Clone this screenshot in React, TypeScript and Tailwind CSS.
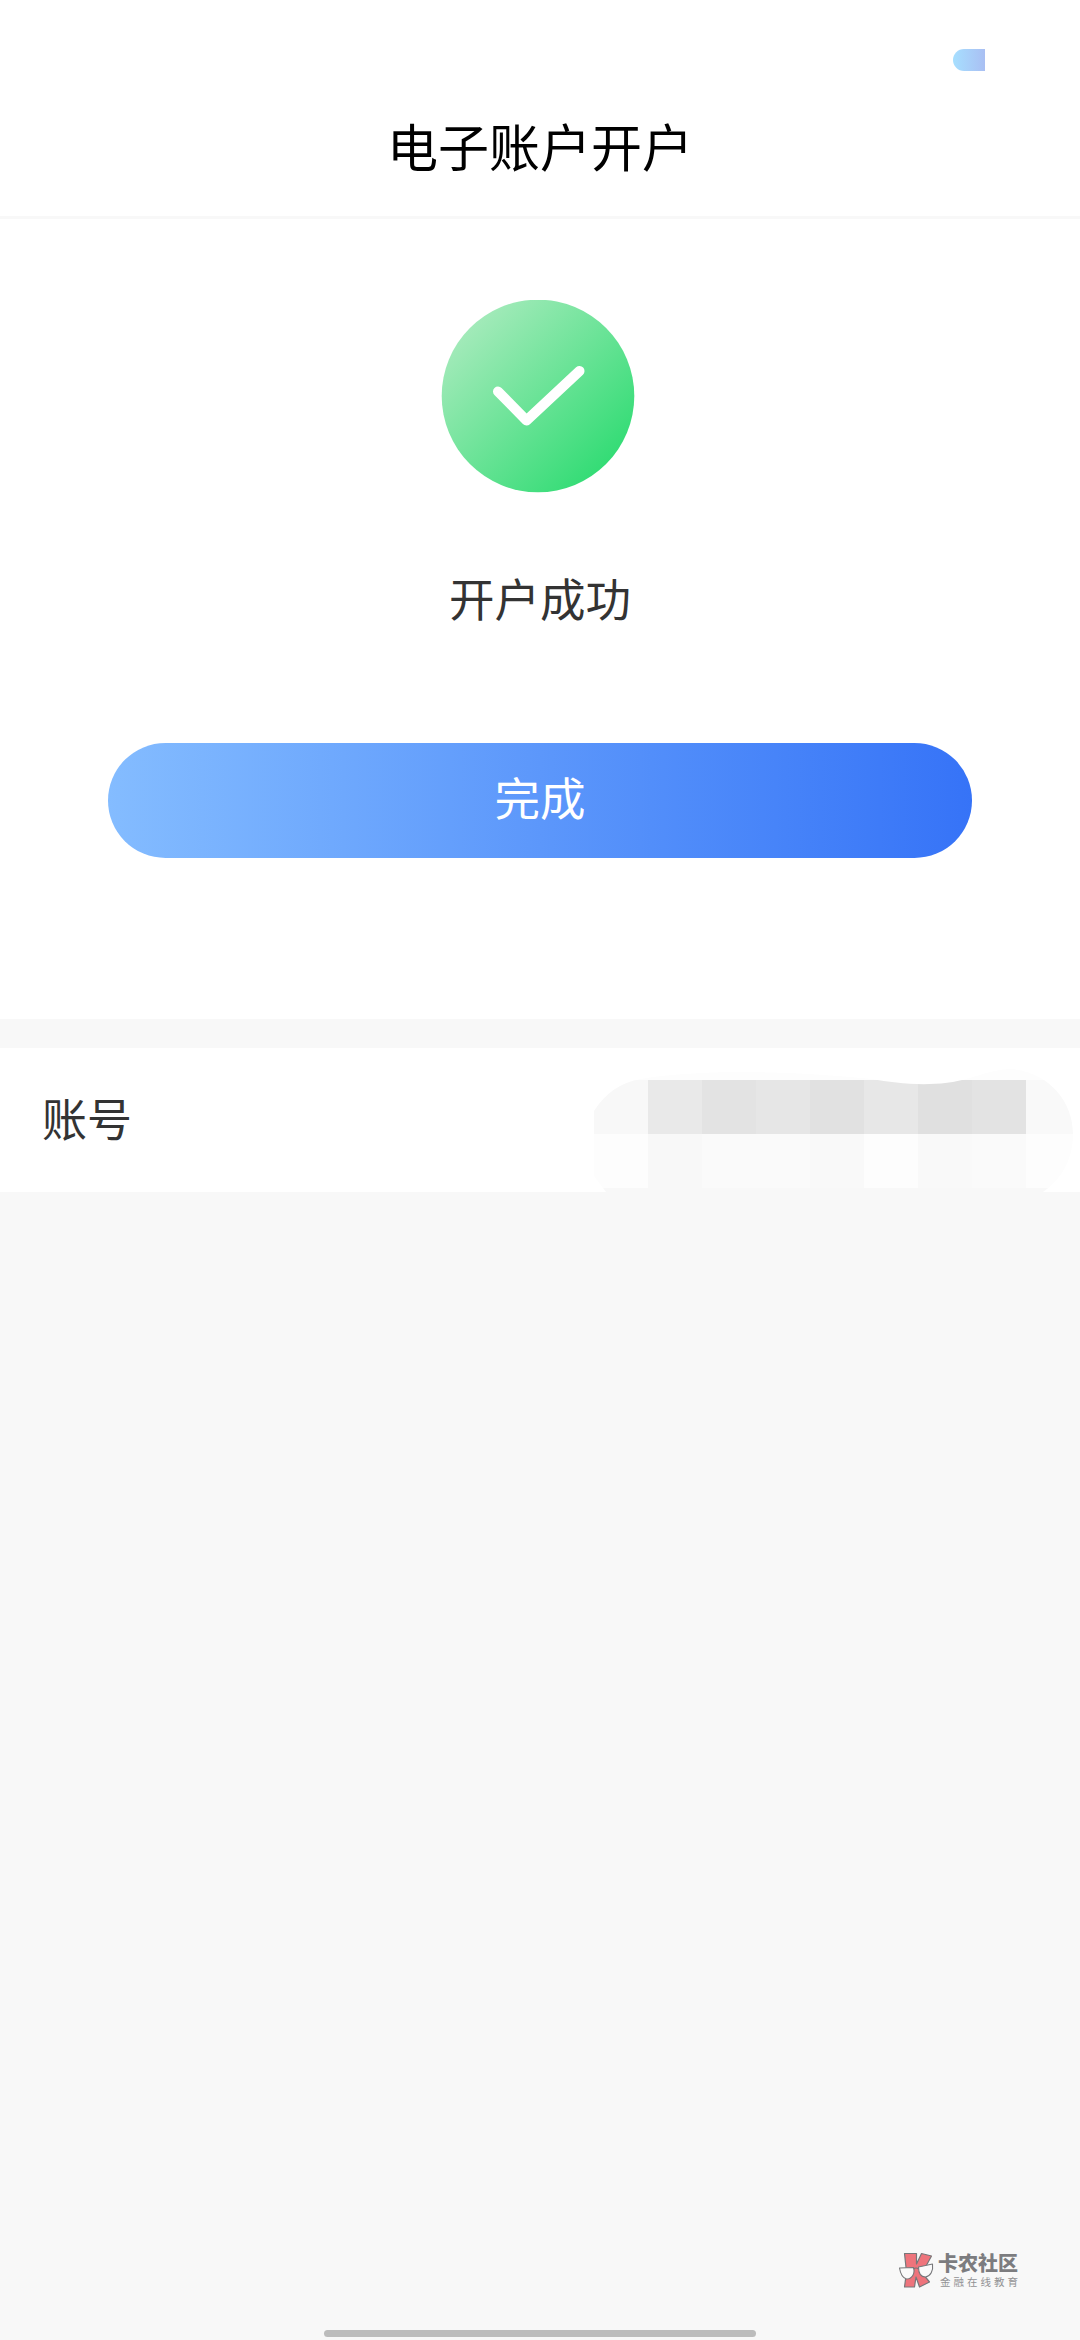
import React from "react";

const CELL = 54;

// Two rows of blocks that hide the account number
const mosaicRows: string[][] = [
  ["#f8f8f8", "#e9e9e9", "#e3e3e3", "#e6e6e6", "#e1e1e1", "#e7e7e7", "#e0e0e0", "#e3e3e3", "#f9f9f9"],
  ["#fdfdfd", "#f8f8f8", "#fafafa", "#fafafa", "#f9f9f9", "#fdfdfd", "#f9f9f9", "#fafafa", "#fdfdfd"],
];

const SuccessIcon: React.FC = () => (
  <svg width="194" height="194" viewBox="0 0 194 194" fill="none">
    <defs>
      <linearGradient id="success" x1="28" y1="28" x2="166" y2="166" gradientUnits="userSpaceOnUse">
        <stop stopColor="#a2eab9" />
        <stop offset="1" stopColor="#33dc75" />
      </linearGradient>
    </defs>
    <circle cx="97" cy="96" r="96.3" fill="url(#success)" />
    <path
      d="M57 91.500L85.500 120.500L138.500 71"
      stroke="white"
      strokeWidth="10"
      strokeLinecap="round"
      strokeLinejoin="round"
    />
  </svg>
);

const MaskedNumber: React.FC = () => (
  <svg width="486" height="144" viewBox="0 0 486 144">
    <defs>
      <clipPath id="mask">
        <path d="M0 63Q17 36 47 31Q80 25 142 24Q210 24 278 31C305 36 343 40 376 30Q403 21 417 21C454 24 479 53 479 86C479 111 468 131 449 144H12L0 128Z" />
      </clipPath>
    </defs>
    <g clipPath="url(#mask)" shapeRendering="crispEdges">
      <rect width="486" height="32" fill="#fdfdfd" />
      {mosaicRows.map((row, y) =>
        row.map((fill, x) => (
          <rect key={`${x}-${y}`} x={x * CELL} y={32 + y * CELL} width={CELL} height={CELL} fill={fill} />
        ))
      )}
      <rect y="140" width="486" height="4" fill="#f8f8f8" />
    </g>
  </svg>
);

const CommunityLogo: React.FC = () => (
  <svg
    className="overflow-visible"
    width="36"
    height="38"
    viewBox="1.5 1 36 38"
    stroke="#77777a"
    strokeLinejoin="round"
  >
    <path
      d="M6 2.500H18V13L23 2.500L33 5L27 16L22 20L31 31L21 36L17.500 26L16 36H6L8 21Z"
      fill="#ee747c"
      strokeWidth="1.200"
    />
    <path d="M1 17L15 16.500C17 23 13 28 8 28C4 27 2 23 1 17Z" fill="#fafafa" strokeWidth="1.100" />
    <path d="M20 16L34 13C35 20 32 25 27 26C22 26 20 22 20 16Z" fill="#fafafa" strokeWidth="1.100" />
    <path d="M15 18Q17.500 16 20 18" fill="none" strokeWidth="1.200" />
  </svg>
);

const App: React.FC = () => {
  return (
    <div className="flex h-[2340px] w-[1080px] flex-col overflow-hidden bg-[#f8f8f8] font-['Noto_Sans_CJK_SC',sans-serif] text-[#333333]">
      <header className="flex h-[219px] shrink-0 flex-col border-b-3 border-[#f8f8f8] bg-white">
        <div className="flex h-[82px] items-end justify-end pr-[95px] pb-[11px]">
          <div className="h-[22px] w-8 rounded-l-full bg-linear-to-r from-[#a6dfff] to-[#a9bff3]" />
        </div>
        <h1 className="text-center text-[51px] leading-[127px] text-black">电子账户开户</h1>
      </header>

      <main className="flex h-[800px] shrink-0 flex-col items-center bg-white pt-[81px]">
        <div className="mr-[4px]">
          <SuccessIcon />
        </div>
        <p className="mt-[68px] text-[45.500px] leading-[70px]">开户成功</p>
        <button className="mt-[111px] h-[115px] w-[864px] rounded-full bg-linear-to-r from-[#84bcff] via-[#5c97fb] to-[#3673f7] pb-[9px] text-[45.500px] leading-[106px] text-white">
          完成
        </button>
      </main>

      <section className="mt-[29px] flex h-36 shrink-0 justify-between bg-white pl-[42px]">
        <span className="text-[45px] leading-[140px]">账号</span>
        <MaskedNumber />
      </section>

      <footer className="mt-auto flex flex-col">
        <div className="flex justify-end pr-[60px]">
          <div className="flex gap-[2px]">
            <CommunityLogo />
            <div className="-mt-px flex w-[82px] flex-col text-[#7c7c7f]">
              <span className="text-[20px] leading-[24px] font-black whitespace-nowrap">卡农社区</span>
              <span className="pl-[2px] text-[10.500px] leading-[14px] tracking-[3px] whitespace-nowrap text-[#929294]">
                金融在线教育
              </span>
            </div>
          </div>
        </div>
        <div className="mx-auto mt-[40px] mb-[3px] h-[7px] w-[432px] rounded-full bg-[#bcbcbc]" />
      </footer>
    </div>
  );
};

export default App;
